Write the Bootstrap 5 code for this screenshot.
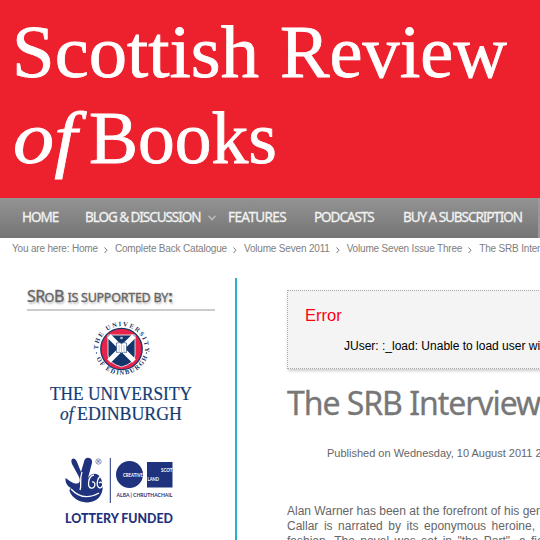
<!DOCTYPE html>
<html lang="en">
<head>
<meta charset="utf-8">
<title>Scottish Review of Books</title>
<meta name="viewport" content="width=device-width, initial-scale=1">
<link href="https://cdn.jsdelivr.net/npm/bootstrap@5.3.0/dist/css/bootstrap.min.css" rel="stylesheet">
<style>
body{font-family:"Liberation Sans",Arial,sans-serif;font-size:12px;line-height:15px;color:#666;width:540px;height:540px;overflow:hidden}
svg{display:block}
.masthead{background:#ec212d;height:198px}
.mainnav{display:grid;grid-template-columns:63px 143px 86px 89px 1fr;height:40px;background:linear-gradient(#939393,#757575);font:13.5px/40px "Noto Sans",sans-serif;padding-left:22px;border-right:2px solid #999}
.mainnav .nav-link{color:#f2f2f2;padding:0;line-height:38px;height:40px;letter-spacing:-1.05px;-webkit-text-stroke:.3px #f2f2f2}
.mainnav .nav-link.open-track{letter-spacing:-.6px}
.mainnav svg{display:inline-block}
.crumbs{font-size:10px;line-height:14px;padding:4px 0 0 12px;height:40px;color:#808080;white-space:nowrap;letter-spacing:-.18px;width:540px;overflow:hidden}
.crumbs>*{flex-shrink:0}
.crumbs svg{margin:5px 7px 0 6px}
.side{width:237px;height:262px;border-right:2px solid #29aecb;padding:9px 20px 0 27px}
.side h3{font:16px/19px "Noto Sans",sans-serif;height:24px;border-bottom:2px solid #ccc;color:#666;text-shadow:1px 2px 2px #bbb;letter-spacing:-.6px;margin:0;-webkit-text-stroke:.35px #666}
.side h3 small{font-size:12.5px;letter-spacing:-.25px}
.main{padding-left:50px;width:303px;white-space:nowrap;padding-top:12px;overflow:hidden}
.notice{height:79px;width:300px;border:1px dotted #aaa;background:#f4f4f4;box-shadow:1px 2px 3px #ccc;padding:14px 0 0 17px;color:#000}
.notice h2{color:#f01;font-size:16.5px;line-height:20px;margin:0 0 14px}
.notice p{padding-left:39px;margin:0}
.main h1{font:32px/44px "Noto Sans",sans-serif;color:#777;letter-spacing:-1.05px;-webkit-text-stroke:.3px #777;margin:12px 0 0}
.published{font-size:11px;margin:21px 0 43px 40px}
.story p{margin:0}
.story p:nth-child(2){word-spacing:2.2px}
.story p:nth-child(3){word-spacing:2.1px}
</style>
<script src="https://cdn.jsdelivr.net/npm/bootstrap@5.3.0/dist/js/bootstrap.bundle.min.js"></script>
</head>
<body class="bg-white">
<header class="masthead">
<svg width="540" height="198" fill="#fff" stroke="#fff" stroke-width=".8" font-family="Liberation Serif,serif" font-size="75">
<text x="12" y="77" textLength="247" lengthAdjust="spacingAndGlyphs">Scottish</text>
<text x="280" y="77" textLength="227" lengthAdjust="spacingAndGlyphs">Review</text>
<text x="13" y="163" font-style="italic" textLength="64" lengthAdjust="spacingAndGlyphs">of</text>
<text x="89" y="163" textLength="188" lengthAdjust="spacingAndGlyphs">Books</text>
</svg>
</header>
<nav class="mainnav text-nowrap">
<a class="nav-link" href="#">HOME</a>
<a class="nav-link" href="#">BLOG &amp; DISCUSSION<svg class="ms-2" width="8" height="6" fill="none" stroke="#bbb" stroke-width="1.6"><path d="M.5.7 4 4.5 7.5.7"/></svg></a>
<a class="nav-link open-track" href="#">FEATURES</a>
<a class="nav-link" href="#">PODCASTS</a>
<a class="nav-link" href="#">BUY A SUBSCRIPTION</a>
</nav>
<div class="crumbs d-flex">
<span>You are here: Home</span><svg width="4" height="7" fill="none" stroke="#777"><path d="M.5.5 3 3.2.5 6"/></svg>
<span>Complete Back Catalogue</span><svg width="4" height="7" fill="none" stroke="#777"><path d="M.5.5 3 3.2.5 6"/></svg>
<span>Volume Seven 2011</span><svg width="4" height="7" fill="none" stroke="#777"><path d="M.5.5 3 3.2.5 6"/></svg>
<span>Volume Seven Issue Three</span><svg width="4" height="7" fill="none" stroke="#777"><path d="M.5.5 3 3.2.5 6"/></svg>
<span>The SRB Interview</span>
</div>
<div class="d-flex">
<aside class="side flex-shrink-0">
<h3>SR<small>O</small>B <small>IS SUPPORTED BY</small><b>:</b></h3>
<svg width="190" height="227" viewBox="27 311 190 227">
<circle cx="121.5" cy="349" r="20.7" fill="#e7224b" stroke="#133569" stroke-width="1.3"/>
<path d="M108 335h27v20q0 8-13.500 12-13.500-4-13.500-12z" fill="#133569" stroke="#fff" stroke-width=".8"/>
<path d="M109 336l25 25M134 336l-25 25" stroke="#fff" stroke-width="5"/>
<path d="M116.500 343q3-1 5 .5 2-1.500 5-.5v9.500q-3-1-5 .5-2-1.500-5-.5z" fill="#fff" stroke="#133569" stroke-width=".6"/>
<path d="M121.500 344v8M118 346h2M118 348h2M118 350h2M123 346h2M123 348h2M123 350h2" stroke="#8190aa" stroke-width=".5"/>
<path d="M118 336h7l-2 5h-3zM117 365v-4h2v-3h5v3h2v4z" fill="#133569"/><circle cx="121.500" cy="338" r="1.300" fill="#bdc5d4"/>
<path id="upper" d="M98.500 354.500A23.500 23.500 0 1 1 144.500 354.500" fill="none"/>
<path id="lower" d="M94.500 352.500A27.500 27.500 0 0 0 148.500 352.500" fill="none"/>
<g fill="#133569" font-family="Liberation Serif,serif" font-weight="bold" font-size="6.500">
<text><textPath href="#upper" startOffset="5" textLength="76">THE UNIVERSITY</textPath></text>
<text><textPath href="#lower" startOffset="6" textLength="65">OF EDINBURGH</textPath></text>
</g>
<circle cx="96.500" cy="353" r=".7" fill="#133569"/><circle cx="146.500" cy="353" r=".7" fill="#133569"/>
<g fill="#133c74" stroke="#133c74" stroke-width=".2" font-family="Liberation Serif,serif" font-size="18">
<text x="50" y="400" textLength="142" lengthAdjust="spacingAndGlyphs">THE UNIVERSITY</text>
<text x="60" y="419.500" font-style="italic" textLength="13.500" lengthAdjust="spacingAndGlyphs">of</text>
<text x="77" y="419.500" textLength="105" lengthAdjust="spacingAndGlyphs">EDINBURGH</text>
</g>
<g fill="#1f327d">
<path d="M65.500 478C70 481 73 484 77 483.500C81 483 80 479 78.500 476L72 464Q70 459 73.500 458.500Q75.500 458.500 77 462L81 472L84.500 460Q86 457 89.500 458Q92.500 459 92 463L88 478C91 473 97 472 100 477C105 485 103 496 96 500C88 505 76 502 71 494C69 491 69 489 71 488C67 486 65 482 65.500 478z"/>
<g fill="none" stroke="#fff"><path d="M82 472C79 480 82 486 80 490M71 489Q83 502 99 493" stroke-width="1.300"/><path d="M94 475C88 476 87 487 91 488C96 489 96 481 92 482M102 476C96 477 96 488 100 488C105 486 102 480 99 483" stroke-width="1.300"/></g>
<path d="M109.800 458h1v45h-1z"/><circle cx="129.500" cy="474.500" r="13.500"/><path d="M147 462h25.500v25.500H147z"/>
</g>
<g font-family="Lato,sans-serif" fill="#1f327d">
<circle cx="98.500" cy="461.500" r="2.700" fill="none" stroke="#1f327d" stroke-width=".5"/><text x="97" y="463.300" font-size="4.500">R</text>
<g fill="#fff" font-size="5" font-weight="bold"><text x="123" y="476.500" textLength="20" lengthAdjust="spacingAndGlyphs">CREATIVE</text><text x="161" y="471.500" textLength="11.500" lengthAdjust="spacingAndGlyphs">SCOT</text><text x="147.500" y="481" textLength="11.500" lengthAdjust="spacingAndGlyphs">LAND</text></g>
<text x="116.500" y="497" font-size="5" font-weight="bold" textLength="56" lengthAdjust="spacingAndGlyphs">ALBA | CHRUTHACHAIL</text>
<text x="65" y="523" font-size="12.500" font-weight="900" textLength="108" lengthAdjust="spacingAndGlyphs">LOTTERY FUNDED</text>
</g>
</svg>
</aside>
<main class="main">
<div class="notice"><h2>Error</h2><p>JUser: :_load: Unable to load user with ID: 62</p></div>
<h1>The SRB Interview</h1>
<p class="published">Published on Wednesday, 10 August 2011 20:00</p>
<div class="story"><p>Alan Warner has been at the forefront of his generation</p><p>Callar is narrated by its eponymous heroine, and</p><p>fashion. The novel was set in "the Port", a fictional</p></div>
</main>
</div>
</body>
</html>
